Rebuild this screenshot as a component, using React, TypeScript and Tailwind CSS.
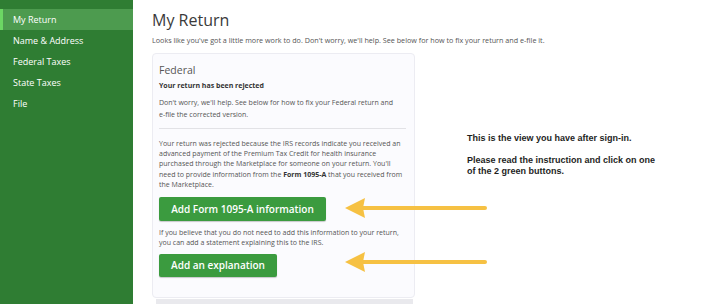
export default function App() {
  const nav = ["My Return", "Name & Address", "Federal Taxes", "State Taxes", "File"];
  return (
    <div className="flex h-[304px] w-[720px] overflow-hidden bg-white font-['Open_Sans',sans-serif] text-[#333]">
      <aside className="w-[133px] shrink-0 bg-[#2f7d33] pt-[9px]">
        {nav.map((item, i) => (
          <div
            key={item}
            className={
              i === 0
                ? "flex h-[21px] items-center border-l-[3px] border-[#6cd664] bg-[#4d9b4f] pl-[10px] text-[9px] text-white"
                : "flex h-[21px] items-center pl-[13px] text-[9px] text-white"
            }
          >
            {item}
          </div>
        ))}
      </aside>

      <main className="flex-1 pl-[19px] pt-[8px]">
        <h1 className="text-[16px] leading-[24px] text-[#3a3a3a]">My Return</h1>
        <p className="mt-[3px] text-[7.2px] leading-[10px] text-[#555]">
          Looks like you've got a little more work to do. Don't worry, we'll help. See below for how to fix your return and e-file it.
        </p>

        <div className="relative mt-[8px] flex">
          <div className="flex w-[263px] flex-col">
            <section className="h-[245px] rounded-[4px] border border-[#ececf2] bg-[#fbfbfe] px-[6px] pt-[8px]">
              <h2 className="text-[10.5px] leading-[16px] text-[#555]">Federal</h2>
              <p className="mt-[3px] text-[7px] font-bold leading-[10px] text-[#333]">Your return has been rejected</p>
              <p className="mt-[6px] pr-[14px] text-[7px] leading-[11.5px] text-[#555]">
                Don't worry, we'll help. See below for how to fix your Federal return and e-file the corrected version.
              </p>
              <div className="mt-[8px] h-px w-[247px] bg-[#e2e2e6]" />
              <p className="mt-[10px] pr-[4px] text-[7px] leading-[10.2px] text-[#555]">
                Your return was rejected because the IRS records indicate you received an advanced payment of the Premium Tax Credit for health insurance purchased through the Marketplace for someone on your return. You'll need to provide information from the <span className="font-bold text-[#333]">Form 1095-A</span> that you received from the Marketplace.
              </p>
              <button className="mt-[7px] flex h-[24px] w-[167px] items-center justify-center rounded-[2px] bg-[#3b9b3f] text-[10px] font-semibold text-white shadow-[0_1px_1px_rgba(0,0,0,0.2)]">
                Add Form 1095-A information
              </button>
              <p className="mt-[7px] pr-[4px] text-[7px] leading-[10px] text-[#555]">
                If you believe that you do not need to add this information to your return, you can add a statement explaining this to the IRS.
              </p>
              <button className="mt-[6px] flex h-[23px] w-[118px] items-center justify-center rounded-[2px] bg-[#3b9b3f] text-[10px] font-semibold text-white shadow-[0_1px_1px_rgba(0,0,0,0.2)]">
                Add an explanation
              </button>
            </section>
            <div className="ml-[4px] mt-[1px] h-[8px] w-[257px] bg-[#e9e9ed]" />
          </div>

          <div className="ml-[52px] mt-[80px] font-['Liberation_Sans',Arial,sans-serif] text-[9px] font-bold leading-[11px] text-[#1e1e1e]">
            <p>This is the view you have after sign-in.</p>
            <p className="mt-[11px]">
              Please read the instruction and click on one
              <br />
              of the 2 green buttons.
            </p>
          </div>

          <svg className="absolute left-[193px] top-[144px]" width="142" height="22" viewBox="0 0 142 22">
            <line x1="16" y1="11" x2="140" y2="11" stroke="#f6c143" strokeWidth="4" strokeLinecap="round" />
            <polygon points="0,11 20,1 18,11 20,21" fill="#f6c143" />
          </svg>
          <svg className="absolute left-[193px] top-[198px]" width="142" height="22" viewBox="0 0 142 22">
            <line x1="16" y1="11" x2="140" y2="11" stroke="#f6c143" strokeWidth="4" strokeLinecap="round" />
            <polygon points="0,11 20,1 18,11 20,21" fill="#f6c143" />
          </svg>
        </div>
      </main>
    </div>
  );
}
